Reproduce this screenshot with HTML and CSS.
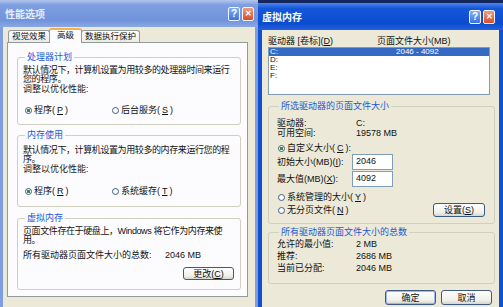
FILE: index.html
```html
<!DOCTYPE html>
<html lang="zh-CN">
<head>
    <meta charset="UTF-8">
    <title>性能选项 / 虚拟内存</title>
    <link rel="stylesheet" href="styles.css">
</head>
<body>
    <div class="screen">
        <!-- 性能选项 -->
        <div class="win win-perf">
            <div class="titlebar">
                <span class="title">性能选项</span>
                <div class="tb-btns">
                    <span class="tb-btn tb-help">?</span>
                    <span class="tb-btn tb-close">&#x2715;</span>
                </div>
            </div>
            <div class="win-body">
                <div class="tabs">
                    <span class="tab">视觉效果</span>
                    <span class="tab active">高级</span>
                    <span class="tab">数据执行保护</span>
                </div>
                <div class="tab-panel">
                    <fieldset class="group g-cpu">
                        <legend>处理器计划</legend>
                        <p class="desc">默认情况下，计算机设置为用较多的处理器时间来运行<br>您的程序。</p>
                        <p class="line">调整以优化性能:</p>
                        <div class="radio-row">
                            <label class="radio checked"><span class="dot"></span>程序(<u>P</u>)</label>
                            <label class="radio"><span class="dot"></span>后台服务(<u>S</u>)</label>
                        </div>
                    </fieldset>
                    <fieldset class="group g-mem">
                        <legend>内存使用</legend>
                        <p class="desc">默认情况下，计算机设置为用较多的内存来运行您的程<br>序。</p>
                        <p class="line">调整以优化性能:</p>
                        <div class="radio-row">
                            <label class="radio checked"><span class="dot"></span>程序(<u>R</u>)</label>
                            <label class="radio"><span class="dot"></span>系统缓存(<u>T</u>)</label>
                        </div>
                    </fieldset>
                    <fieldset class="group g-vm">
                        <legend>虚拟内存</legend>
                        <p class="desc">页面文件存在于硬盘上，Windows 将它作为内存来使<br>用。</p>
                        <div class="total-row">
                            <span class="total-label">所有驱动器页面文件大小的总数:</span>
                            <span>2046 MB</span>
                        </div>
                        <div class="btn-row">
                            <button class="xp-btn btn-change">更改(<u>C</u>)</button>
                        </div>
                    </fieldset>
                </div>
            </div>
        </div>

        <!-- 虚拟内存 -->
        <div class="win win-vm">
            <div class="titlebar">
                <span class="title">虚拟内存</span>
                <div class="tb-btns">
                    <span class="tb-btn tb-help">?</span>
                    <span class="tb-btn tb-close">&#x2715;</span>
                </div>
            </div>
            <div class="win-body">
                <div class="list-head">
                    <span class="col-drive">驱动器 [卷标](<u>D</u>)</span>
                    <span>页面文件大小(MB)</span>
                </div>
                <div class="listbox">
                    <div class="list-row selected"><span class="col-drive">C:</span><span>2046 - 4092</span></div>
                    <div class="list-row"><span class="col-drive">D:</span></div>
                    <div class="list-row"><span class="col-drive">E:</span></div>
                    <div class="list-row"><span class="col-drive">F:</span></div>
                </div>

                <fieldset class="group g-drive">
                    <legend>所选驱动器的页面文件大小</legend>
                    <div class="info-grid">
                        <span>驱动器:</span><span>C:</span>
                        <span>可用空间:</span><span>19578 MB</span>
                    </div>
                    <label class="radio checked r-custom"><span class="dot"></span>自定义大小(<u>C</u>):</label>
                    <div class="size-grid">
                        <span>初始大小(MB)(<u>I</u>):</span><span class="input">2046</span>
                        <span>最大值(MB)(<u>X</u>):</span><span class="input">4092</span>
                    </div>
                    <label class="radio r-system"><span class="dot"></span>系统管理的大小(<u>Y</u>)</label>
                    <div class="nopage-row">
                        <label class="radio"><span class="dot"></span>无分页文件(<u>N</u>)</label>
                        <button class="xp-btn btn-set">设置(<u>S</u>)</button>
                    </div>
                </fieldset>

                <fieldset class="group g-total">
                    <legend>所有驱动器页面文件大小的总数</legend>
                    <div class="info-grid totals">
                        <span>允许的最小值:</span><span>2 MB</span>
                        <span>推荐:</span><span>2686 MB</span>
                        <span>当前已分配:</span><span>2046 MB</span>
                    </div>
                </fieldset>

                <div class="dialog-buttons">
                    <button class="xp-btn default">确定</button>
                    <button class="xp-btn">取消</button>
                </div>
            </div>
        </div>
    </div>
</body>
</html>
```

FILE: styles.css
```css
body {
    margin: 0;
    background-color: #14285e;
    font-family: "Liberation Sans", "Noto Sans CJK SC", sans-serif;
    font-size: 9px;
    color: #111;
}
p {
    margin: 0;
}
.screen {
    display: flex;
    align-items: flex-start;
    width: 503px;
    height: 307px;
    overflow: hidden;
}
.win {
    display: flex;
    flex-direction: column;
    flex-shrink: 0;
}
.titlebar {
    height: 27px;
    display: flex;
    align-items: center;
    justify-content: space-between;
    box-sizing: border-box;
}
.title {
    font-size: 10px;
    font-weight: bold;
}
.tb-btns {
    display: flex;
    gap: 2px;
}
.tb-btn {
    width: 12px;
    height: 14px;
    box-sizing: border-box;
    border: 1px solid #f2f5fc;
    border-radius: 2px;
    color: #fff;
    font-family: "Liberation Sans", sans-serif;
    font-weight: bold;
    font-size: 10px;
    display: flex;
    align-items: center;
    justify-content: center;
}
.tb-help {
    background: linear-gradient(#7fb0f7, #3a74e0);
}
.tb-close {
    background: linear-gradient(#ee9c80, #d94c24);
    font-size: 8px;
}
.win-body {
    background-color: #ece9d8;
    border-style: solid;
    border-width: 0;
    box-sizing: border-box;
}

/* 性能选项 */
.win-perf {
    width: 258px;
}
.win-perf .titlebar {
    padding: 0 4px 0 5px;
    background: linear-gradient(#b3c6ee, #7f9fe0 18%, #7193db 75%, #8aa8e4);
    color: #e6edfb;
}
.win-perf .win-body {
    height: 280px;
    border-width: 0 3px;
    border-color: #7f9edf;
    padding: 0 7px 0 4px;
}
.tabs {
    display: flex;
    align-items: flex-end;
    height: 15px;
    padding-left: 1px;
}
.tab {
    height: 11px;
    line-height: 11px;
    padding: 0 3px;
    font-size: 8.5px;
    border: 1px solid #919b9c;
    border-bottom: none;
    border-radius: 3px 3px 0 0;
    background: linear-gradient(#ffffff, #ecebe4);
}
.tab.active {
    height: 13px;
    padding: 0 7px;
    margin: 0 -1px -1px;
    border-top: 2px solid #f4b247;
    background: #fcfcfe;
    position: relative;
    z-index: 1;
}
.tab-panel {
    height: 255px;
    box-sizing: border-box;
    border: 1px solid #919b9c;
    background-color: #fcfcfe;
    padding: 9px 6px 0 9px;
}
.group {
    margin: 0;
    min-width: 0;
    border: 1px solid #d0d0bf;
    border-radius: 3px;
}
.group legend {
    color: #2457d3;
    line-height: 10px;
    padding: 0 2px;
    margin-left: 2px;
}
.tab-panel .group {
    padding: 4px 3px 9px 5px;
}
.desc {
    white-space: nowrap;
    line-height: 9px;
    letter-spacing: -0.4px;
}
.line {
    line-height: 9px;
    margin-top: 1px;
    color: #222;
}
.radio-row {
    display: flex;
    margin-top: 11px;
    height: 10px;
}
.radio {
    display: inline-flex;
    align-items: center;
    gap: 2px;
    line-height: 10px;
}
.radio-row .radio {
    margin-left: 2px;
}
.radio-row .radio:first-child {
    width: 85px;
}
.dot {
    width: 7px;
    height: 7px;
    box-sizing: border-box;
    border: 1px solid #3b5f8c;
    border-radius: 50%;
    background: #fbfbf8;
}
.radio.checked .dot {
    background: radial-gradient(circle, #2f8f3a 0 1.4px, #fbfbf8 1.9px);
}
.g-mem {
    margin-top: 5px;
}
.tab-panel .g-mem {
    padding-top: 6px;
    padding-bottom: 10px;
}
.g-mem .radio-row {
    margin-top: 12px;
}
.g-vm {
    margin-top: 6px;
}
.total-row {
    display: flex;
    margin-top: 6px;
    line-height: 9px;
}
.total-label {
    width: 142px;
}
.btn-row {
    display: flex;
    justify-content: flex-end;
    margin-top: 7px;
    padding-right: 3px;
}
.xp-btn {
    font-family: inherit;
    font-size: 9px;
    height: 14px;
    padding: 0;
    border: 1px solid #3d5a80;
    border-radius: 3px;
    background: linear-gradient(#ffffff, #f1f0ea 70%, #d8d6cc);
    color: #111;
    line-height: 12px;
}
.btn-change {
    width: 51px;
    height: 13px;
}

/* 虚拟内存 */
.win-vm {
    width: 245px;
    margin-top: 3px;
}
.win-vm .titlebar {
    padding: 0 8px 0 4px;
    background: linear-gradient(#4a86f0, #1657da 20%, #0a4bd0 75%, #2560dc);
    color: #fff;
}
.win-vm .win-body {
    height: 277px;
    border-width: 0 4px;
    border-color: #1150d2;
    padding: 6px 4px 0 6px;
}
.list-head {
    display: flex;
    line-height: 10px;
}
.list-head .col-drive {
    width: 109px;
}
.listbox {
    margin: 1px 5px 0 0;
    height: 48px;
    box-sizing: border-box;
    border: 1px solid #7f9db9;
    background-color: #fff;
}
.list-row {
    display: flex;
    height: 8px;
    line-height: 8px;
    font-size: 8px;
}
.list-row .col-drive {
    width: 126px;
    padding-left: 1px;
}
.list-row.selected {
    background-color: #3469c4;
    color: #fff;
}
.g-drive {
    margin-top: 6px;
    padding: 7px 9px 6px 8px;
}
.info-grid {
    display: grid;
    grid-template-columns: 76px 1fr;
    line-height: 10px;
}
.info-grid span:nth-child(even) {
    padding-left: 3px;
}
.r-custom {
    margin-top: 5px;
    margin-left: 1px;
    display: flex;
}
.size-grid {
    display: grid;
    grid-template-columns: 75px 41px;
    grid-auto-rows: 17px;
    align-items: center;
}
.input {
    height: 16px;
    box-sizing: border-box;
    border: 1px solid #7f9db9;
    background-color: #fff;
    padding: 2px 0 0 3px;
    line-height: 9px;
}
.r-system {
    margin-top: 5px;
    margin-left: 1px;
    display: flex;
}
.nopage-row {
    display: flex;
    justify-content: space-between;
    align-items: center;
    height: 14px;
    margin-top: 1px;
}
.nopage-row .radio {
    margin-left: 1px;
}
.btn-set {
    width: 52px;
}
.g-total {
    margin-top: 3px;
    padding: 1px 9px 9px 8px;
}
.info-grid.totals {
    line-height: 12px;
}
.dialog-buttons {
    display: flex;
    justify-content: flex-end;
    gap: 5px;
    margin: 6px 3px 0 0;
}
.dialog-buttons .xp-btn {
    width: 51px;
    height: 15px;
}
.xp-btn.default {
    box-shadow: inset 0 0 0 1px #9bb8ee;
}
```
